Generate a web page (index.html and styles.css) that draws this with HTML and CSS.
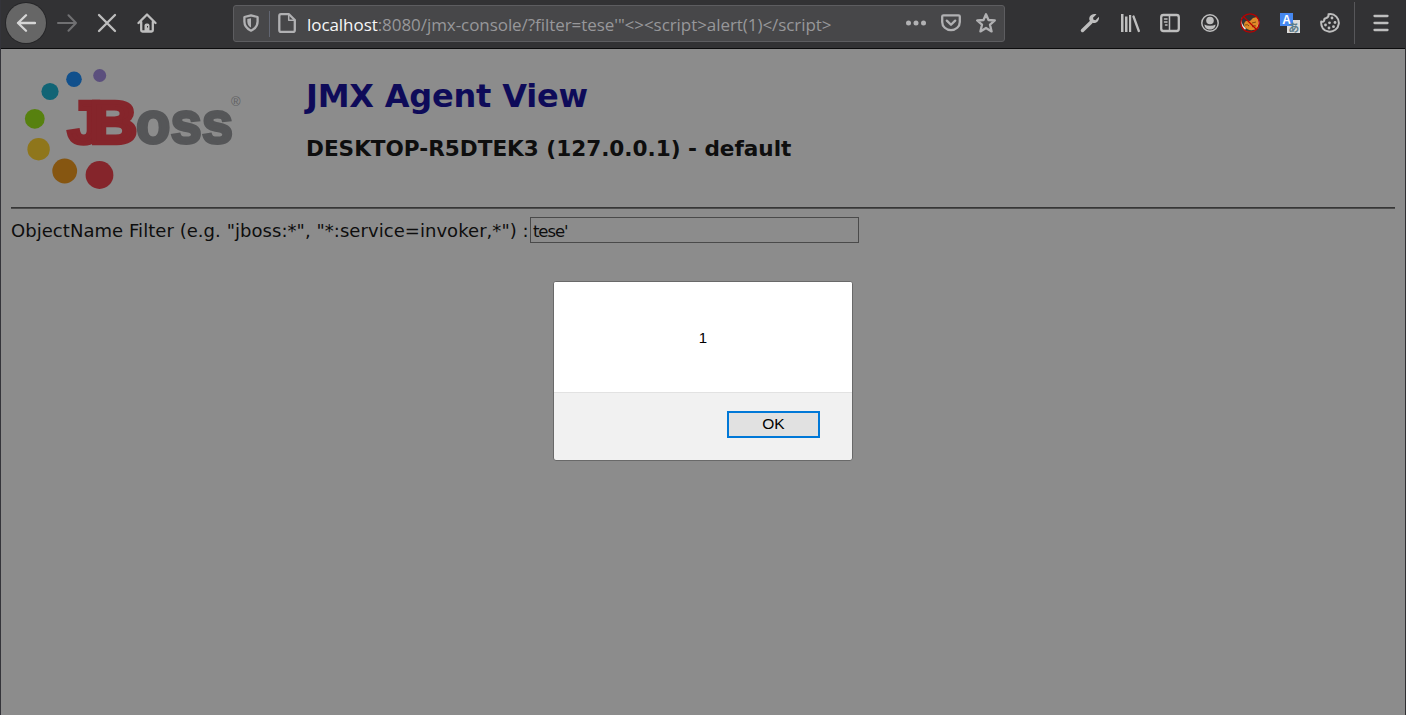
FILE: index.html
```html
<!DOCTYPE html>
<html lang="en">
<head>
<meta charset="utf-8">
<title>JBoss JMX Management Console</title>
<link rel="stylesheet" href="styles.css">
</head>
<body>
<div class="window">
<header class="toolbar">
  <nav class="nav">
    <span class="tool back"><svg class="icon" viewBox="0 0 20 20"><path class="line" d="M19 10H2M10 2.2L2 10l8 7.8"/></svg></span>
    <span class="tool forward"><svg class="icon" viewBox="0 0 20 20"><path class="line thin" d="M1 10h18M11.5 2.2L19 10l-7.500 7.800"/></svg></span>
    <span class="tool"><svg class="icon" viewBox="0 0 20 20"><path class="line" d="M2 2l16 16M18 2L2 18"/></svg></span>
    <span class="tool"><svg class="icon" viewBox="0 0 20 20"><path class="line" d="M1.500 10L10 1.500 18.500 10M4.200 9v8.200q0 1.300 1.300 1.300h9q1.300 0 1.300-1.300V9"/><path class="fill" d="M7.500 19v-6.500q0-2 2-2h1q2 0 2 2V19z"/><path class="hole" d="M10 13h1v1.500h-1z"/></svg></span>
  </nav>
  <div class="urlbar">
    <span class="slot shield"><svg class="icon" viewBox="0 0 20 20"><path class="line" d="M10 2.300L16.600 4v4.500c0 4.500-2.600 7.300-6.600 9.200-4-1.900-6.600-4.700-6.600-9.200V4z"/><path class="fill" d="M10 5.200v9.300C7.500 13 6.300 11 6.300 8.400V6z"/></svg></span>
    <span class="slot page-icon"><svg class="icon" viewBox="0 0 20 20"><path class="line" d="M4 1.200h8l5.800 5.800v10.300q0 1.700-1.700 1.700H4q-1.700 0-1.700-1.700V3Q2.300 1.200 4 1.200z"/><path class="line hair" d="M11.700 1.500v5.800h6"/></svg></span>
    <span class="url"><b>localhost</b>:8080/jmx-console/?filter=tese'"&lt;&gt;&lt;script&gt;alert(1)&lt;/script&gt;</span>
    <span class="slot"><svg class="icon" viewBox="0 0 20 20"><circle class="fill" cx="2.500" cy="10" r="2.500"/><circle class="fill" cx="10" cy="10" r="2.500"/><circle class="fill" cx="17.500" cy="10" r="2.500"/></svg></span>
    <span class="slot"><svg class="icon" viewBox="0 0 20 20"><path class="line" d="M2.500 2.300h15q1.300 0 1.300 1.300v5.300a8.800 8.300 0 0 1-17.600 0V3.600q0-1.300 1.300-1.300z"/><path class="line" d="M5.800 7.600l4.200 4.200 4.200-4.200"/></svg></span>
    <span class="slot"><svg class="icon" viewBox="0 0 20 20"><path class="line" d="M10 1.300l2.500 5.700 6.300.5-4.800 4.200 1.600 6.700-5.600-3.500-5.600 3.500L6 11.700 1.200 7.500 7.500 7z"/></svg></span>
  </div>
  <div class="tools">
    <span class="tool"><svg class="icon" viewBox="0 0 20 20"><path class="line heavy" d="M2.500 17.500l8.500-8.300"/><path class="fill" d="M16.500 1.300L13 4.700l.5 2 2 .5L19 3.800c.5 4-2.500 6.900-6 6.200-3.500-.9-4.500-4-3.200-6.500C11.200 1 14 .4 16.500 1.300z"/></svg></span>
    <span class="tool"><svg class="icon" viewBox="0 0 20 20"><path class="fill" d="M1 1h2.500v18H1zM5 3.500h2.500V19H5zM9 2h2.200v17H9z"/><path class="line" d="M13.500 3.500L18.800 18"/></svg></span>
    <span class="tool"><svg class="icon" viewBox="0 0 20 20"><rect class="line" x="1.200" y="2" width="17.600" height="16" rx="2.200"/><path class="line hair" d="M9.500 2v16M4.500 6h2.500M4.500 9h2.500M5.500 12h1.500"/></svg></span>
    <span class="tool"><svg class="icon" viewBox="0 0 20 20"><circle class="line hair" cx="10" cy="10" r="8.200"/><circle class="fill" cx="10" cy="7.500" r="3.800"/><path class="fill" d="M4.500 11.500q2 1.300 5.500 1.300t5.500-1.300c0 3.400-2.300 5-5.500 5s-5.500-1.600-5.500-5z"/></svg></span>
    <span class="tool"><svg class="icon" viewBox="0 0 20 20"><path class="tail" d="M2 4q-2 7 4 11l-1 2Q0 13 1 7zM17 5l2.500 4-1.500 7-4-1z"/><path class="fox" d="M4 11Q5 6.500 10 8l3-3 4-1 1.500 5-1.500 7Q9 19 4.500 14z"/><path class="fox-line" d="M5 12q3-1 4 1M12 10l4-1M12 14q2-2 4-1"/><circle class="ban" cx="10" cy="10" r="9.200"/><path class="ban" d="M3.500 3.500l13 13"/></svg></span>
    <span class="tool"><svg class="icon" viewBox="0 0 20 20"><rect class="paper" x="7" y="7" width="13" height="13"/><rect class="blue" width="13" height="13"/><text class="latin" x="6.500" y="10.500">A</text><text class="kana" x="13.800" y="18.500">あ</text></svg></span>
    <span class="tool"><svg class="icon" viewBox="0 0 20 20"><path class="line thin" d="M8.500 1.300q4.500-1 7.800 2.300c4 4.300 3 10-1 13.200-4 3-9.800 2.200-12.500-1.500Q.8 12.300 1.200 8.500q2 .8 3-.8-.4-2.200 2-2.700 2.800-.8 2.300-3.700z"/><circle class="fill" cx="12" cy="5" r="1.400"/><circle class="fill" cx="9.500" cy="9.800" r="1.400"/><circle class="fill" cx="15" cy="9.500" r="1.400"/><circle class="fill" cx="5.500" cy="12" r="1.400"/><circle class="fill" cx="9" cy="15" r="1.400"/><circle class="fill" cx="13.500" cy="13.700" r="1.400"/></svg></span>
    <span class="separator"></span>
    <span class="tool"><svg class="icon" viewBox="0 0 20 20"><path class="line" d="M3.500 3h13M3.500 10h13M3.500 17h13"/></svg></span>
  </div>
</header>
<main class="page">
  <div class="masthead">
    <svg class="logo" viewBox="0 0 230 130">
      <circle cx="88.700" cy="10.500" r="6.500" fill="#5b4f7d"/><circle cx="63" cy="14.200" r="7.800" fill="#11508c"/><circle cx="39" cy="26.500" r="8.600" fill="#116475"/><circle cx="23.800" cy="53.800" r="9.900" fill="#57810f"/><circle cx="27.600" cy="84.200" r="11.200" fill="#8f761b"/><circle cx="53.700" cy="106" r="12.400" fill="#865611"/><circle cx="88.500" cy="110" r="13.900" fill="#85252b"/>
      <g class="brand"><text class="gray" x="125" y="77.500" textLength="97" lengthAdjust="spacingAndGlyphs">oss</text><text class="red" x="57" y="77.500" textLength="34" lengthAdjust="spacingAndGlyphs">J</text><text class="red" x="79" y="77.500" textLength="47" lengthAdjust="spacingAndGlyphs">B</text></g>
      <text class="mark" x="220" y="41">®</text>
    </svg>
    <div class="titles"><h1>JMX Agent View</h1><h2>DESKTOP-R5DTEK3 (127.0.0.1) - default</h2></div>
  </div>
  <div class="rule"></div>
  <form class="filter"><label for="filter">ObjectName Filter (e.g. "jboss:*", "*:service=invoker,*") :</label><input id="filter" value="tese'"></form>
</main>
</div>
<div class="dialog"><div class="message">1</div><div class="actions"><button class="ok">OK</button></div></div>
</body>
</html>
```
FILE: styles.css
```css
* { box-sizing: border-box; }
body { margin: 0; height: 715px; overflow: hidden; }
.window { height: 715px; display: flex; flex-direction: column; background: #8c8c8c; border-left: 1px solid #34343a; border-right: 1px solid #303033; }
.toolbar { height: 49px; flex: none; display: flex; background: #323234; border-bottom: 1px solid #0c0c0d; padding-left: 5px; }
.nav, .tools { display: flex; height: 46px; }
.tool { width: 40px; height: 46px; display: flex; align-items: center; justify-content: center; color: #bebebe; }
.back { height: 40px; margin: 3px 1px 0 0; border-radius: 50%; background: #666; box-shadow: 0 0 0 1px #262628; color: #d6d6d6; }
.forward { color: #707072; }
.icon { width: 20px; height: 20px; flex: none; }
.line { fill: none; stroke: currentColor; stroke-width: 2.3; stroke-linecap: round; stroke-linejoin: round; }
.thin { stroke-width: 2; }
.hair { stroke-width: 1.5; }
.heavy { stroke-width: 3.5; }
.fill { fill: currentColor; }
.hole { fill: #323234; }
.urlbar { width: 772px; height: 37px; margin: 5px 0 0 66px; display: flex; align-items: center; background: #474749; border: 1px solid #5d5d60; border-radius: 3px; color: #b1b1b3; }
.slot { width: 35px; height: 35px; flex: none; padding-bottom: 1px; display: flex; align-items: center; justify-content: center; }
.shield { height: 26px; width: 36px; padding-right: 1px; border-right: 1px solid #626672; }
.page-icon { width: 34px; }
.url { width: 591px; margin-left: 3px; margin-top: 2px; font: 17px/34px "Open Sans", sans-serif; letter-spacing: -0.06px; color: #97979a; white-space: nowrap; }
.url b { font-weight: 400; color: #f7f7f8; }
.tools { margin-left: 65px; }
.separator { width: 1px; height: 42px; margin: 2px 6px 0 4px; background: #57575a; }
.tail { fill: #ddd; }
.fox { fill: #e08a28; }
.fox-line { fill: none; stroke: #834811; }
.ban { fill: none; stroke: #b90000; stroke-width: 1.3; }
.paper { fill: #ddd; }
.blue { fill: #4688f1; }
.latin { font: bold 12px "Liberation Sans", sans-serif; fill: #fff; text-anchor: middle; }
.kana { font: bold 11px "Noto Sans CJK JP", sans-serif; fill: #607d8b; text-anchor: middle; }
.page { padding: 0 10px; font-family: "DejaVu Sans", sans-serif; color: #0e0e0e; }
.masthead { height: 158px; display: flex; padding-top: 16px; }
.logo { width: 230px; height: 130px; margin-right: 65px; overflow: visible; }
.brand { font: bold 59px "Liberation Sans", sans-serif; stroke-width: 4.5; }
.red { fill: #85252b; stroke: #85252b; }
.gray { fill: #555658; stroke: #555658; stroke-width: 3; }
.mark { font: 13px "Liberation Sans", sans-serif; fill: #606163; }
.titles { white-space: nowrap; }
h1 { margin: 11px 0 0; font: bold 32px/40px "DejaVu Sans", sans-serif; letter-spacing: -0.2px; color: #0e0b59; }
h2 { margin: 17px 0 0; font: bold 21.6px/31px "DejaVu Sans", sans-serif; letter-spacing: -0.03px; }
.rule { height: 2px; background: linear-gradient(#363636 50%, #4d4d4d 50%); }
.filter { display: flex; align-items: center; margin: 8px 0 0; height: 26px; font-size: 18px; }
.filter label { width: 519px; white-space: nowrap; letter-spacing: 0.05px; }
.filter input { width: 329px; height: 26px; border: 1px solid #4a4a4a; background: transparent; padding: 4px 2px 2px; font: 16.500px "DejaVu Sans", sans-serif; letter-spacing: -1.1px; color: #0e0e0e; }
.dialog { position: absolute; left: 553px; top: 281px; width: 300px; height: 180px; border: 1px solid #696969; border-radius: 3px; overflow: hidden; background: #f1f1f1; font: 15px "Liberation Sans", sans-serif; color: #000; }
.message { height: 111px; background: #fff; border-bottom: 1px solid #e2e2e2; text-align: center; line-height: 112px; }
.actions { display: flex; justify-content: flex-end; padding: 18px 32px 0 0; }
.ok { width: 93px; height: 27px; border: 2px solid #0078d7; background: #e1e1e1; padding: 0 0 1px; font: inherit; font-size: 15.500px; color: #000; }
```
